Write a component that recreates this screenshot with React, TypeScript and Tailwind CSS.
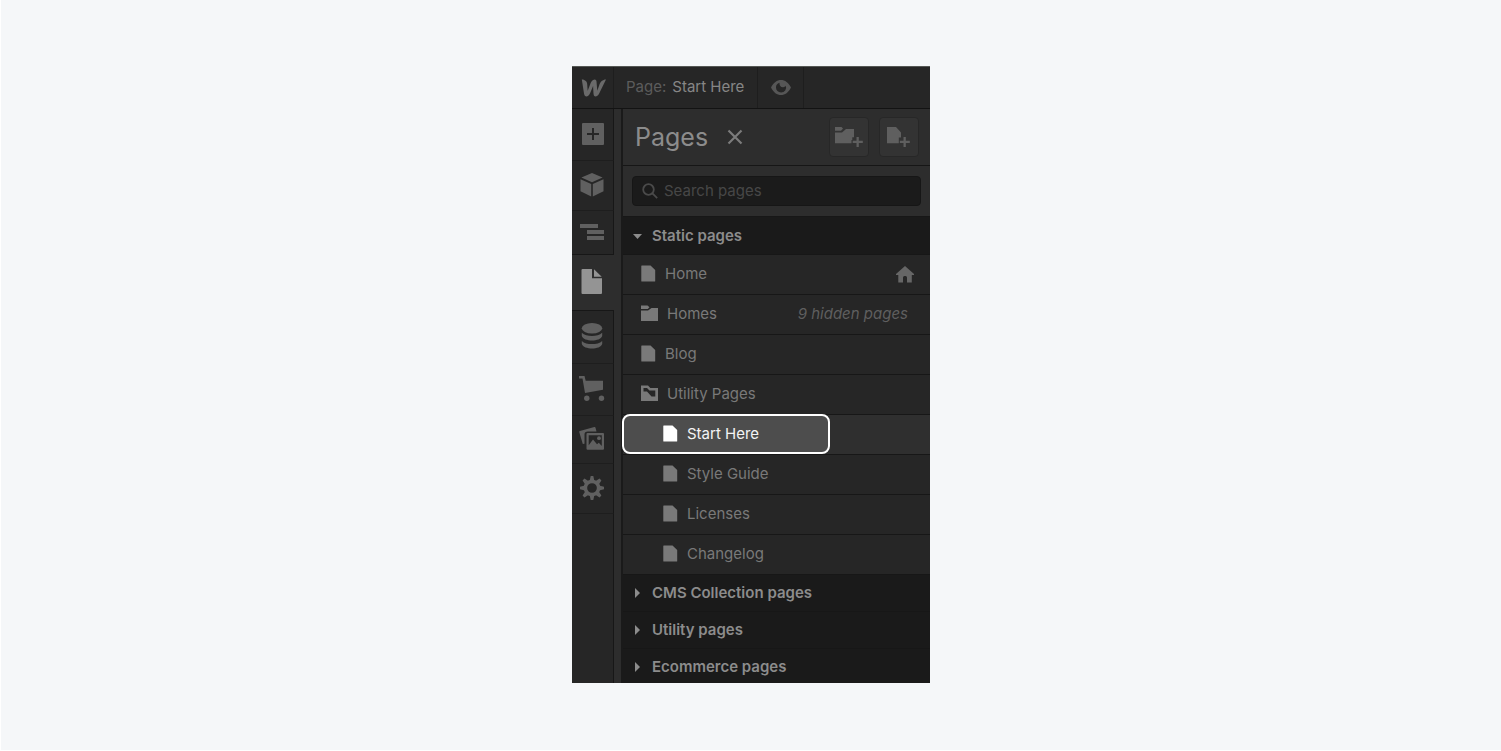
import type { ReactNode } from "react";

type IconProps = { className?: string };

function WLogo() {
  return (
    <svg width="26" height="18" viewBox="0 0 26 18" fill="currentColor" aria-hidden="true">
      <path d="M18.300 6 16.300 11.800C16.200 10.500 15.800 6 15.600 3.500 15.500 1.500 15 .6 13.600.6 11.400.6 10 3 9 5.700L6.700 11.800C6.600 10.500 6.200 5 6.200 5 6 2.300 3.500.6.8.6L3 14.500C3.300 16.500 4.100 17.400 5.600 17.400 7.500 17.400 8.800 15 9.700 12.800L12.100 7C12.200 8.500 12.500 14.500 12.500 14.500 12.600 16.500 13.200 17.400 14.600 17.400 16.800 17.400 18 15.200 19 12.700L25 .6C21.500.6 19.400 3 18.300 6Z" />
    </svg>
  );
}

function EyeIcon() {
  return (
    <svg width="20" height="16" viewBox="0 0 20 16" aria-hidden="true">
      <path fill="currentColor" fillRule="evenodd" d="M10 0C6 0 2.500 2.500 0 7.500c2.500 5 6 7.500 10 7.500s7.500-2.500 10-7.500C17.500 2.500 14 0 10 0ZM10 12.500a5 5 0 0 1-5-5A5 5 0 0 1 8.500 2.700C8.200 5.200 9.700 7.400 12.300 7.200c1-.1 1.700-.5 2.500-1.500A5 5 0 0 1 10 12.500Z" />
    </svg>
  );
}

function AddIcon() {
  return (
    <svg width="22" height="22" viewBox="0 0 22 22" aria-hidden="true">
      <path fill="currentColor" fillRule="evenodd" d="M1 0h20a1 1 0 0 1 1 1v20a1 1 0 0 1-1 1H1a1 1 0 0 1-1-1V1a1 1 0 0 1 1-1ZM10 5v5H5v2h5v5h2v-5h5v-2h-5V5Z" />
    </svg>
  );
}

function BoxIcon() {
  return (
    <svg width="24" height="24" viewBox="0 0 24 24" fill="currentColor" aria-hidden="true">
      <path d="M12 0 22.600 4.500 12 9.300 1.400 4.500Z" />
      <path d="M0.500 6.300 11.200 11V23.500L0.500 18.300Z" />
      <path d="M23.500 6.300 12.800 11V23.500L23.500 18.300Z" />
    </svg>
  );
}

function NavigatorIcon() {
  return (
    <svg width="24" height="18" viewBox="0 0 24 18" fill="currentColor" aria-hidden="true">
      <rect width="18" height="4" x="0" y="1" />
      <rect width="17" height="4" x="7" y="7" />
      <rect width="17" height="4" x="7" y="13" />
    </svg>
  );
}

function PageTabIcon() {
  return (
    <svg width="22" height="26" viewBox="0 0 22 26" fill="currentColor" aria-hidden="true">
      <path d="M1.500 0H11V9.200H21V24a1 1 0 0 1-1 1H1.500a1 1 0 0 1-1-1V1a1 1 0 0 1 1-1Z" />
      <path d="M13 .3 20.700 7.700H13Z" />
    </svg>
  );
}

function DatabaseIcon() {
  return (
    <svg width="22" height="26" viewBox="0 0 22 26" fill="currentColor" aria-hidden="true">
      <ellipse cx="11" cy="5.300" rx="10.200" ry="5.300" />
      <path d="M.8 9.800C3 12 7 12.900 11 12.900s8-.9 10.200-3.100V13c-1 3-5.500 4.500-10.200 4.500S1.800 16 .8 13Z" />
      <path d="M.8 17.900C3 20.100 7 21 11 21s8-.9 10.200-3.100v3.200c-1 3-5.500 4.500-10.200 4.500S1.800 24.100.8 21.100Z" />
    </svg>
  );
}

function CartIcon() {
  return (
    <svg width="26" height="26" viewBox="0 0 26 26" fill="currentColor" aria-hidden="true">
      <path d="M0 0H5.500L6.700 4.800H24V13.800L6 17 3.500 2.500H0Z" />
      <circle cx="7.800" cy="22.300" r="2.700" />
      <circle cx="22.500" cy="22.300" r="2.700" />
    </svg>
  );
}

function AssetsIcon() {
  return (
    <svg width="26" height="24" viewBox="0 0 26 24" aria-hidden="true">
      <path fill="currentColor" d="M.2 5A1 1 0 0 1 .9 4L15.300.1A1 1 0 0 1 16.500.8L17.500 4.500H9C6.500 4.500 5.500 5.500 5.500 7.500V16.700L3.800 17Z" />
      <path fill="currentColor" fillRule="evenodd" d="M8.500 6H24A1 1 0 0 1 25 7V21.700A1 1 0 0 1 24 22.700H8.500A1 1 0 0 1 7.500 21.700V7A1 1 0 0 1 8.500 6ZM9.700 8.200V18.300L14 12.500 18 17.300 19.800 15.800 22.800 19V8.200Z" />
      <circle cx="20" cy="11.200" r="1.900" fill="currentColor" />
    </svg>
  );
}

function GearIcon() {
  return (
    <svg width="24" height="24" viewBox="0 0 24 24" aria-hidden="true">
      <g fill="currentColor">
        {[0, 45, 90, 135].map((angle) => (
          <path key={angle} transform={`rotate(${angle} 12 12)`} d="M10.700 0h2.600L14.400 5H9.600ZM10.700 24h2.600L14.400 19H9.600Z" />
        ))}
      </g>
      <circle cx="12" cy="12" r="6.600" fill="none" stroke="currentColor" strokeWidth="3.500" />
    </svg>
  );
}

function PageIcon({ className }: IconProps) {
  return (
    <svg width="15" height="19" viewBox="0 0 15 19" fill="currentColor" className={className} aria-hidden="true">
      <path d="M.8.500H9.500L14.200 5V16a.5.500 0 0 1-.5.500H.8a.5.500 0 0 1-.5-.5V1A.5.500 0 0 1 .8.500Z" />
    </svg>
  );
}

function FolderIcon() {
  return (
    <svg width="17" height="19" viewBox="0 0 17 19" fill="currentColor" aria-hidden="true">
      <path d="M0 .5H6.500L8.500 2.200 6.800 4H0Z" />
      <path d="M0 5.500H7L10.500 3H17V16H0Z" />
    </svg>
  );
}

function OpenFolderIcon() {
  return (
    <svg width="17" height="19" viewBox="0 0 17 19" aria-hidden="true">
      <path fill="currentColor" fillRule="evenodd" d="M0 .5H7L9.300 3H17V16H0ZM2.500 3V6.500H6L10.500 11.500H14.300V5.500H8.500L6 3Z" />
    </svg>
  );
}

function NewFolderIcon() {
  return (
    <svg width="28" height="20" viewBox="0 0 28 20" fill="currentColor" aria-hidden="true">
      <path d="M0 0H6.500L8 1.500 6 3.700H0Z" />
      <path d="M0 5.500H7L11 2H19V10.200H17.300V13H16.500V16.300H0Z" />
      <path d="M21.500 10H23.800V13.700H27.800V16H23.800V20H21.500V16H17.700V13.700H21.500Z" />
    </svg>
  );
}

function NewPageIcon() {
  return (
    <svg width="24" height="20" viewBox="0 0 24 20" fill="currentColor" aria-hidden="true">
      <path d="M0 0H9L14 5.500V10.500H11.800V16.300H0Z" />
      <path d="M16.500 10H18.800V13.700H22.800V16H18.800V20H16.500V16H12.800V13.700H16.500Z" />
    </svg>
  );
}

function HomeIcon() {
  return (
    <svg width="18" height="17" viewBox="0 0 18 17" fill="currentColor" aria-hidden="true">
      <path d="M9 0 18 8V9H15.800V16.500H11V11.500A1.500 1.500 0 0 0 9.500 10H8.500A1.500 1.500 0 0 0 7 11.500V16.500H2.300V9H0V8Z" />
    </svg>
  );
}

const tabs: { label: string; icon: ReactNode; cell: string }[] = [
  { label: "Add", icon: <AddIcon />, cell: "h-[52px] border-r border-b-[#1e1e1e] border-r-[#171717]" },
  { label: "Symbols", icon: <BoxIcon />, cell: "h-[50px] border-r border-b-[#1e1e1e] border-r-[#171717] pr-0.5" },
  { label: "Navigator", icon: <NavigatorIcon />, cell: "h-11 border-r border-[#171717] pr-0.5" },
  { label: "Pages", icon: <PageTabIcon />, cell: "h-14 border-[#171717] bg-[#2d2d2d] pr-0.5 text-[#949494]" },
  { label: "CMS", icon: <DatabaseIcon />, cell: "h-[53px] border-r border-b-[#1e1e1e] border-r-[#171717] pr-0.5" },
  { label: "Ecommerce", icon: <CartIcon />, cell: "h-[52px] border-r border-b-[#1e1e1e] border-r-[#171717] pr-0.5" },
  { label: "Assets", icon: <AssetsIcon />, cell: "h-12 border-r border-b-[#1e1e1e] border-r-[#171717] pr-0.5" },
  { label: "Settings", icon: <GearIcon />, cell: "h-[50px] border-r border-b-[#1e1e1e] border-r-[#171717] pr-0.5" },
];

function Row({ icon, label, trailing, nested }: { icon: ReactNode; label: string; trailing?: ReactNode; nested?: boolean }) {
  return (
    <li className="border-b border-[#171717]">
      <a href="#" className={`flex h-[39px] items-center pr-4 ${nested ? "pl-10" : "pl-[18px]"}`}>
        {icon}
        <span className="pl-[9px]">{label}</span>
        {trailing}
      </a>
    </li>
  );
}

function Section({ label }: { label: string }) {
  return (
    <button type="button" className="flex w-full items-center border-b border-[#171717] bg-[#1a1a1a] py-2 pl-3 text-left font-semibold leading-5 text-[#8c8c8c] last:border-b-0 last:pb-1.5">
      <svg width="5" height="10" viewBox="0 0 5 10" fill="currentColor" aria-hidden="true">
        <path d="M0 0 5 5 0 10Z" />
      </svg>
      <span className="pl-3">{label}</span>
    </button>
  );
}

export default function App() {
  return (
    <main className="flex min-h-screen items-start justify-center border-b border-l border-white bg-[#f5f7f9] pt-[66px] font-['Inter',sans-serif] text-[15px] text-[#797979]">
      <div className="w-full max-w-[358px] overflow-hidden border-t border-[#555855] bg-[#262626]">
        <header className="flex h-[42px] items-stretch border-b border-[#131313]">
          <a href="#" aria-label="Dashboard" className="flex w-[42px] items-center justify-center border-r border-[#1e1e1e] pl-0.5 text-[#6a6a6a]">
            <WLogo />
          </a>
          <button type="button" className="flex w-36 items-center gap-1.5 border-r border-[#1e1e1e] pl-3">
            <span className="text-[#5c5c5c]">Page:</span>
            <span className="text-[#868686]">Start Here</span>
          </button>
          <button type="button" aria-label="Preview" className="flex w-[46px] items-center justify-center border-r border-[#1e1e1e] text-[#565656]">
            <EyeIcon />
          </button>
        </header>

        <div className="flex">
          <nav aria-label="Tools" className="flex w-[42px] shrink-0 flex-col text-[#606060]">
            {tabs.map((tab) => (
              <button key={tab.label} type="button" aria-label={tab.label} className={`flex w-full items-center justify-center border-b pb-0.5 ${tab.cell}`}>
                {tab.icon}
              </button>
            ))}
            <div className="flex-1 border-r border-[#171717]" />
          </nav>
          <div className="w-[7px] shrink-0 bg-[#2d2d2d]" />

          <section className="min-w-0 flex-1 border-l-2 border-[#1a1a1a]">
            <div className="flex h-[57px] items-center border-b border-[#161616] bg-[#2d2d2d] pl-3 pr-[11px]">
              <h1 className="text-[25px] leading-8 text-[#8c8c8c]">Pages</h1>
              <button type="button" aria-label="Close" className="ml-[19px] text-[#7c7c7c]">
                <svg width="16" height="16" viewBox="0 0 16 16" fill="none" stroke="currentColor" strokeWidth="2.200" aria-hidden="true">
                  <path d="M1.500 1.500 14.500 14.500M14.500 1.500 1.500 14.500" />
                </svg>
              </button>
              <div className="ml-auto flex gap-2.5 text-[#5f5f5f]">
                <button type="button" aria-label="New folder" className="flex size-10 items-center justify-center rounded-sm border border-[#272727] bg-[#333333]">
                  <NewFolderIcon />
                </button>
                <button type="button" aria-label="New page" className="flex size-10 items-center justify-center rounded-sm border border-[#272727] bg-[#333333]">
                  <NewPageIcon />
                </button>
              </div>
            </div>

            <div className="bg-[#2d2d2d] px-[9px] py-2.5">
              <label className="flex h-[30px] items-center gap-1.5 rounded-sm border border-[#161616] bg-[#1b1b1b] pl-[9px] text-[#4a4a4a]">
                <svg width="16" height="16" viewBox="0 0 16 16" fill="none" stroke="currentColor" strokeWidth="1.800" aria-hidden="true">
                  <circle cx="6.500" cy="6.500" r="5.300" />
                  <path d="M10.400 10.400 15.200 15.200" />
                </svg>
                <input type="text" aria-label="Search pages" placeholder="Search pages" className="min-w-0 flex-1 bg-transparent outline-none placeholder:text-[#474747]" />
              </label>
            </div>

            <button type="button" className="flex h-[39px] w-full items-center border-y border-[#171717] bg-[#1a1a1a] pl-2.5 pt-0.5 text-left font-semibold text-[#8c8c8c]">
              <svg width="9" height="5" viewBox="0 0 9 5" fill="currentColor" aria-hidden="true">
                <path d="M0 0H9L4.500 5Z" />
              </svg>
              <span className="pl-2.5">Static pages</span>
            </button>
            <ul>
              <Row icon={<PageIcon />} label="Home" trailing={<span className="ml-auto text-[#666666]"><HomeIcon /></span>} />
              <Row icon={<FolderIcon />} label="Homes" trailing={<em className="ml-auto pr-1.5 text-[#5f5f5f]">9 hidden pages</em>} />
              <Row icon={<PageIcon />} label="Blog" />
              <Row icon={<OpenFolderIcon />} label="Utility Pages" />
              <li className="relative border-b border-[#171717] bg-[#2f2f2f]">
                <a href="#" aria-current="page" className="absolute -left-px -top-px flex h-10 w-52 items-center rounded-lg border-2 border-white bg-[#4d4d4d] pl-[39px] text-[#f4f4f4]">
                  <PageIcon className="text-white" />
                  <span className="pl-[9px]">Start Here</span>
                </a>
                <div className="h-[39px]" />
              </li>
              <Row nested icon={<PageIcon />} label="Style Guide" />
              <Row nested icon={<PageIcon />} label="Licenses" />
              <Row nested icon={<PageIcon />} label="Changelog" />
            </ul>
            <div>
              <Section label="CMS Collection pages" />
              <Section label="Utility pages" />
              <Section label="Ecommerce pages" />
            </div>
          </section>
        </div>
      </div>
    </main>
  );
}
